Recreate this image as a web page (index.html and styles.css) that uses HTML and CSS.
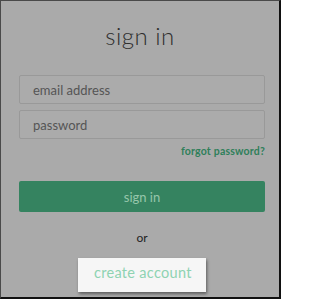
FILE: index.html
```html
<!DOCTYPE html>
<html>
<head>
<meta charset="utf-8">
<link rel="stylesheet" href="styles.css">
</head>
<body>
<div class="frame">
  <h1 class="title">sign in</h1>
  <form class="form">
    <div class="field">email address</div>
    <div class="field">password</div>
    <div class="forgot-row"><a class="forgot">forgot password?</a></div>
    <div class="btn">sign in</div>
    <div class="or">or</div>
    <div class="create-row"><div class="create">create account</div></div>
  </form>
</div>
</body>
</html>
```

FILE: styles.css
```css
html, body {
  margin: 0;
  padding: 0;
}
body {
  width: 281px;
  height: 299px;
  overflow: hidden;
  font-family: "Lato", "Noto Sans", sans-serif;
}
.frame {
  box-sizing: border-box;
  width: 281px;
  height: 299px;
  background: #aaaaaa;
  border-top: 1px solid #4a4a4a;
  border-left: 1px solid #4a4a4a;
  border-right: 2px solid #111;
  border-bottom: 2px solid #111;
  display: flex;
  flex-direction: column;
}
.title {
  margin: 21px 0 0;
  text-align: center;
  font-size: 24px;
  font-weight: 300;
  color: #2e2e2e;
  line-height: 28px;
  letter-spacing: 0.5px;
}
.form {
  margin: 25px 14px 0 18px;
  display: flex;
  flex-direction: column;
}
.field {
  box-sizing: border-box;
  height: 29px;
  border: 1px solid #999;
  border-radius: 2px;
  background: #ababab;
  padding: 0 13px;
  display: flex;
  align-items: center;
  font-size: 13px;
  color: #555;
  margin-bottom: 6px;
}
.forgot-row {
  display: flex;
  justify-content: flex-end;
  margin-top: 0;
}
.forgot {
  font-size: 10.5px;
  font-weight: 700;
  color: #2f7f5a;
  letter-spacing: 0.2px;
}
.btn {
  margin-top: 24px;
  height: 31px;
  background: #358360;
  border-radius: 2px;
  display: flex;
  align-items: center;
  justify-content: center;
  font-size: 13px;
  color: #97c6ab;
}
.or {
  margin-top: 18px;
  text-align: center;
  font-size: 12px;
  color: #222;
}
.create-row {
  display: flex;
  justify-content: center;
  margin-top: 13px;
}
.create {
  width: 128px;
  height: 34px;
  box-sizing: border-box;
  background: #f6f6f6;
  box-shadow: 1px 2px 3px rgba(0,0,0,0.45);
  padding: 6px 0 0 16px;
  font-size: 14.5px;
  color: #8ed3b2;
  letter-spacing: 0.3px;
}
```
